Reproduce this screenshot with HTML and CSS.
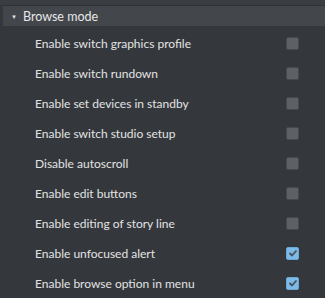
FILE: index.html
```html
<!DOCTYPE html>
<html lang="en">
<head>
  <meta charset="UTF-8">
  <title>Browse mode</title>
  <link rel="stylesheet" href="styles.css">
</head>
<body>
  <div class="panel">
    <div class="section-header">
      <span class="arrow">&#9660;</span>
      <span>Browse mode</span>
    </div>

    <div class="options">
      <label class="option">
        <span>Enable switch graphics profile</span>
        <span class="box"></span>
      </label>
      <label class="option">
        <span>Enable switch rundown</span>
        <span class="box"></span>
      </label>
      <label class="option">
        <span>Enable set devices in standby</span>
        <span class="box"></span>
      </label>
      <label class="option">
        <span>Enable switch studio setup</span>
        <span class="box"></span>
      </label>
      <label class="option">
        <span>Disable autoscroll</span>
        <span class="box"></span>
      </label>
      <label class="option">
        <span>Enable edit buttons</span>
        <span class="box"></span>
      </label>
      <label class="option">
        <span>Enable editing of story line</span>
        <span class="box"></span>
      </label>
      <label class="option">
        <span>Enable unfocused alert</span>
        <span class="box checked">
          <svg width="10" height="8" viewBox="0 0 10 8"><path d="M1.5 4 L4 6.5 L8.5 1.5" fill="none" stroke="#4b4f55" stroke-width="1.8"/></svg>
        </span>
      </label>
      <label class="option">
        <span>Enable browse option in menu</span>
        <span class="box checked">
          <svg width="10" height="8" viewBox="0 0 10 8"><path d="M1.5 4 L4 6.5 L8.5 1.5" fill="none" stroke="#4b4f55" stroke-width="1.8"/></svg>
        </span>
      </label>
    </div>
  </div>
</body>
</html>
```

FILE: styles.css
```css
body {
  margin: 0;
  padding: 0;
  background-color: #34383d;
  font-family: Lato, 'Noto Sans', sans-serif;
  font-size: 12px;
  color: #e3e3e3;
}

.panel {
  padding-top: 5px;
  background: linear-gradient(#3a3e43 0, #3a3e43 5px, transparent 5px);
}

.section-header {
  display: flex;
  align-items: center;
  height: 20px;
  margin-left: 3px;
  padding-left: 8px;
  gap: 6px;
  background-color: #43474c;
  border-top: 1px solid #2f3236;
  font-size: 12.5px;
  color: #e8e8e8;
}

.arrow {
  font-size: 6px;
  color: #e0e0e0;
}

.options {
  padding-top: 2px;
}

.option {
  display: flex;
  align-items: center;
  justify-content: space-between;
  height: 30px;
  padding-left: 35px;
  padding-right: 26px;
}

.box {
  width: 11px;
  height: 11px;
  border: 1px solid #464a4f;
  border-radius: 2px;
  background-color: #5d6166;
  display: flex;
  align-items: center;
  justify-content: center;
}

.box.checked {
  background-color: #7cbbe8;
  border-color: #6aa8d6;
}
```
